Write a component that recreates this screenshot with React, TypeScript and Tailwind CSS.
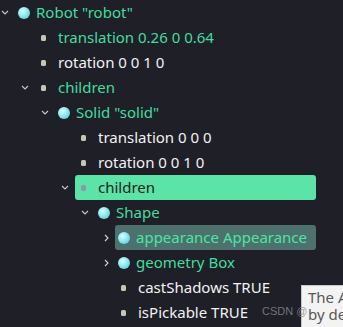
import React from "react";

type Node = {
  level: number;
  label: string;
  kind: "node" | "field";
  chevron?: "down" | "right";
  tone: "green" | "white";
  selected?: "active" | "hover";
};

const rows: Node[] = [
  { level: 0, label: 'Robot "robot"', kind: "node", chevron: "down", tone: "green" },
  { level: 1, label: "translation 0.26 0 0.64", kind: "field", tone: "green" },
  { level: 1, label: "rotation 0 0 1 0", kind: "field", tone: "white" },
  { level: 1, label: "children", kind: "field", chevron: "down", tone: "green" },
  { level: 2, label: 'Solid "solid"', kind: "node", chevron: "down", tone: "green" },
  { level: 3, label: "translation 0 0 0", kind: "field", tone: "white" },
  { level: 3, label: "rotation 0 0 1 0", kind: "field", tone: "white" },
  { level: 3, label: "children", kind: "field", chevron: "down", tone: "green", selected: "active" },
  { level: 4, label: "Shape", kind: "node", chevron: "down", tone: "green" },
  { level: 5, label: "appearance Appearance", kind: "node", chevron: "right", tone: "green", selected: "hover" },
  { level: 5, label: "geometry Box", kind: "node", chevron: "right", tone: "green" },
  { level: 5, label: "castShadows TRUE", kind: "field", tone: "white" },
  { level: 5, label: "isPickable TRUE", kind: "field", tone: "white" },
];

const indent = ["pl-0", "pl-[20px]", "pl-[40px]", "pl-[60px]", "pl-[80px]", "pl-[100px]"];

function Chevron({ dir }: { dir: "down" | "right" }) {
  if (dir === "down") {
    return (
      <svg width="8" height="5" viewBox="0 0 8 5" className="ml-px">
        <path d="M1 1 L4 4 L7 1" fill="none" stroke="#c9c9cc" strokeWidth="1.1" />
      </svg>
    );
  }
  return (
    <svg width="5" height="8" viewBox="0 0 5 8" className="ml-[4px]">
      <path d="M1 1 L4 4 L1 7" fill="none" stroke="#d4d4d6" strokeWidth="1.1" />
    </svg>
  );
}

function Row({ n }: { n: Node }) {
  const box =
    n.selected === "active"
      ? "bg-[#5ce3a8] text-[#16241e]"
      : n.selected === "hover"
        ? "bg-[#4d716c] text-[#4ae6a6]"
        : n.tone === "green"
          ? "text-[#3fdea0]"
          : "text-[#f2f2f2]";

  const bullet = n.selected === "active" ? "bg-[#8c9aa6]" : "bg-[#c9c5b5]";

  return (
    <div className={`flex h-[25px] items-center ${indent[n.level]}`}>
      <span className="flex w-[15px] shrink-0 items-center">
        {n.chevron && <Chevron dir={n.chevron} />}
      </span>
      <div className={`flex h-full flex-1 items-center rounded-[3px] pl-[3px] ${box}`}>
        {n.kind === "node" ? (
          <span className="mr-[6px] h-[12px] w-[12px] shrink-0 rounded-full bg-[radial-gradient(circle_at_38%_35%,#d6ffff_0%,#8ee9ee_45%,#3fc2c8_100%)]" />
        ) : (
          <span className={`ml-[3px] mr-[12px] h-[6px] w-[5px] shrink-0 rounded-[1.5px] ${bullet}`} />
        )}
        <span className="whitespace-nowrap leading-none">{n.label}</span>
      </div>
    </div>
  );
}

export default function App() {
  return (
    <div className="relative h-[327px] w-[343px] overflow-hidden bg-[#1f1f27] font-['Noto_Sans',sans-serif] text-[15px]">
      <div className="w-[316px]">
        {rows.map((n, i) => (
          <Row key={i} n={n} />
        ))}
      </div>

      <div className="absolute left-[301px] top-[285px] h-[60px] w-[42px] overflow-hidden border-l border-t border-[#c8c8c8] bg-[#f3f3f3] pl-[6px] pt-[3px] text-[15px] leading-[17px] text-[#575757]">
        <div className="whitespace-nowrap">The A</div>
        <div className="whitespace-nowrap">by de</div>
      </div>

      <div className="absolute left-[262px] top-[306px] whitespace-nowrap font-['Liberation_Sans',sans-serif] text-[11px] leading-none text-[#8c8c90]/80">
        CSDN @
      </div>
    </div>
  );
}
